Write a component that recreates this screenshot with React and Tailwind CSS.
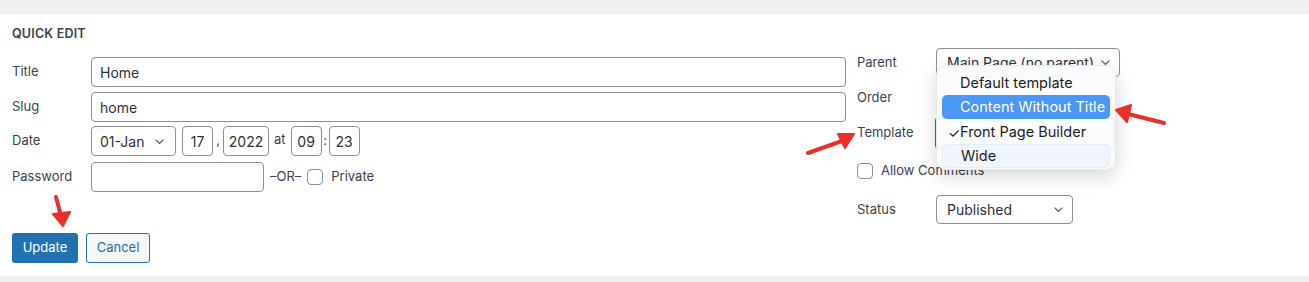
import React from 'react';

const Chevron = ({ className = '' }) => (
  <svg viewBox="0 0 12 8" className={className} fill="none" stroke="#50575e" strokeWidth="1.3">
    <path d="M1.5 1.8 L6 6.2 L10.5 1.8" />
  </svg>
);

const Box = ({ w, children }) => (
  <div className={`${w} h-[30px] border border-[#8c8f94] rounded-[4px] flex items-center justify-center text-[14px] text-[#2c3338]`}>
    {children}
  </div>
);

const Label = ({ children }) => (
  <span className="w-[79px] shrink-0 text-[13px] text-[#3c434a]">{children}</span>
);

const App = () => {
  return (
    <div className="relative w-[1309px] h-[282px] bg-[#f0f0f1] pt-[14px] font-['Inter',sans-serif]">
      <div className="bg-white h-[262px] flex">
        {/* left fieldset */}
        <div className="w-[846px] pl-3 pt-[12px]">
          <div className="h-4 leading-4 text-[12.5px] font-semibold text-[#3c434a] tracking-[0.2px] mb-[15px]">QUICK EDIT</div>

          <div className="flex items-center h-[30px]">
            <Label>Title</Label>
            <div className="flex-1 h-[30px] border border-[#8c8f94] rounded-[4px] flex items-center px-[8px] text-[14px] text-[#2c3338]">Home</div>
          </div>

          <div className="flex items-center h-[30px] mt-[5px]">
            <Label>Slug</Label>
            <div className="flex-1 h-[30px] border border-[#8c8f94] rounded-[4px] flex items-center px-[8px] text-[14px] text-[#2c3338]">home</div>
          </div>

          <div className="flex items-center h-[30px] mt-[4px]">
            <Label>Date</Label>
            <div className="w-[85px] h-[30px] border border-[#8c8f94] rounded-[4px] flex items-center justify-between pl-[8px] pr-[10px] text-[14px] text-[#2c3338]">
              01-Jan
              <Chevron className="w-[11px] h-[7px]" />
            </div>
            <div className="ml-[6px]"><Box w="w-[31px]">17</Box></div>
            <span className="w-[10px] text-center text-[13px] text-[#3c434a]">,</span>
            <Box w="w-[46px]">2022</Box>
            <span className="px-[5px] text-[13px] text-[#3c434a] -mt-[3px]">at</span>
            <Box w="w-[31px]">09</Box>
            <span className="w-[7px] text-center text-[13px] text-[#3c434a]">:</span>
            <Box w="w-[31px]">23</Box>
          </div>

          <div className="flex items-center h-[30px] mt-[6px]">
            <Label>Password</Label>
            <div className="w-[173px] h-[30px] border border-[#8c8f94] rounded-[4px]" />
            <span className="ml-[6px] text-[13px] text-[#3c434a]">–OR–</span>
            <span className="ml-[6px] w-4 h-4 border border-[#8c8f94] rounded-[4px]" />
            <span className="ml-2 text-[13px] text-[#3c434a]">Private</span>
          </div>

          <div className="flex gap-2 mt-[41px]">
            <button className="w-[66px] h-[30px] bg-[#2271b1] text-white text-[13px] rounded-[3px]">Update</button>
            <button className="w-[64px] h-[30px] bg-[#f6f7f7] border border-[#2271b1] text-[#2271b1] text-[13px] rounded-[3px]">Cancel</button>
          </div>
        </div>

        {/* right fieldset */}
        <div className="pl-[11px] pt-[34px]">
          <div className="flex items-center h-[29px]">
            <Label>Parent</Label>
            <div className="w-[184px] h-[29px] border border-[#8c8f94] rounded-[4px] flex items-center justify-between pl-[10px] pr-[8px] text-[14px] text-[#2c3338]">
              Main Page (no parent)
              <Chevron className="w-[11px] h-[7px]" />
            </div>
          </div>
          <div className="flex items-center h-[29px] mt-[6px]">
            <Label>Order</Label>
            <div className="w-[60px] h-[29px] border border-[#8c8f94] rounded-[4px]" />
          </div>
          <div className="flex items-center h-[29px] mt-[6px]">
            <Label>Template</Label>
            <div className="w-[180px] h-[32px] border-2 border-[#2271b1] rounded-[4px] -ml-px" />
          </div>
          <div className="flex items-center h-4 mt-[16px]">
            <span className="w-4 h-4 border border-[#8c8f94] rounded-[4px]" />
            <span className="ml-2 text-[13px] text-[#3c434a]">Allow Comments</span>
          </div>
          <div className="flex items-center h-[29px] mt-[16px]">
            <Label>Status</Label>
            <div className="w-[137px] h-[29px] border border-[#8c8f94] rounded-[4px] flex items-center justify-between pl-[10px] pr-[8px] text-[14px] text-[#2c3338]">
              Published
              <Chevron className="w-[11px] h-[7px]" />
            </div>
          </div>
        </div>
      </div>

      {/* native select popup */}
      <div className="absolute left-[936px] top-[65px] w-[180px] h-[105px] rounded-[10px] bg-[#fafbfc]/95 border border-[#e6e8eb] shadow-[0_6px_20px_rgba(0,0,0,0.16)] px-[5px] pt-[5px] text-[14.5px] text-[#1f1f1f]">
        <div className="h-6 flex items-center pl-[18px]">Default template</div>
        <div className="h-6 flex items-center pl-[18px] bg-[#4a97f5] text-white rounded-[5px]">Content Without Title</div>
        <div className="h-6 flex items-center pl-[6px] mt-px">
          <span className="w-[12px] text-[14px]">✓</span>Front Page Builder
        </div>
        <div className="h-6 flex items-center pl-[18px] bg-[#f1f6fd] border border-[#e4eefa] rounded-[6px]">Wide</div>
      </div>

      {/* annotation arrows */}
      <svg className="absolute inset-0 pointer-events-none" width="1309" height="282" viewBox="0 0 1309 282">
        <g fill="#ea2e2a" stroke="#ea2e2a" strokeLinecap="round" strokeLinejoin="round">
          <path d="M56 197 L61 216" strokeWidth="4" fill="none" />
          <path d="M53 214 L70 212 L63 226 Z" strokeWidth="2" />
          <path d="M808 153 L842 141" strokeWidth="4" fill="none" />
          <path d="M838 134 L854 134 L845 148 Z" strokeWidth="2" />
          <path d="M1164 123 L1128 114" strokeWidth="4" fill="none" />
          <path d="M1131 105 L1116 110 L1127 122 Z" strokeWidth="2" />
        </g>
      </svg>
    </div>
  );
};

export default App;
